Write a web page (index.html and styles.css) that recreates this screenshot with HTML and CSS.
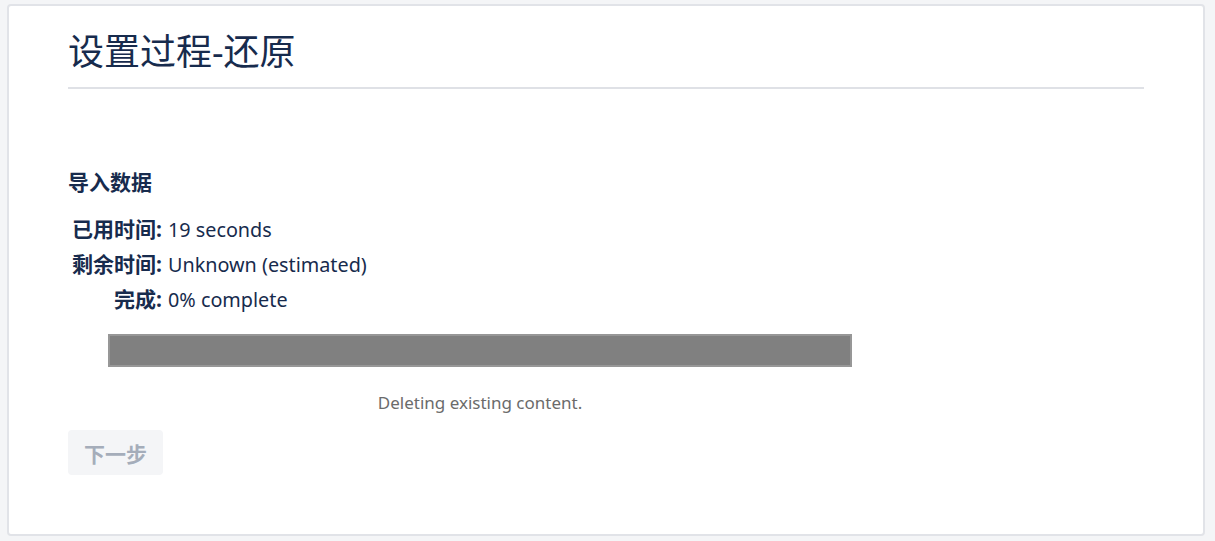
FILE: index.html
```html
<!DOCTYPE html>
<html lang="zh">
<head>
<meta charset="utf-8">
<title>设置过程-还原</title>
<link rel="stylesheet" href="styles.css">
</head>
<body>
<div class="card">
  <h1 class="title">设置过程-还原</h1>
  <h2 class="section">导入数据</h2>
  <dl class="stats">
    <div class="row"><dt>已用时间:</dt><dd>19 seconds</dd></div>
    <div class="row"><dt>剩余时间:</dt><dd>Unknown (estimated)</dd></div>
    <div class="row"><dt>完成:</dt><dd>0% complete</dd></div>
  </dl>
  <div class="progress"><div class="fill"></div></div>
  <div class="status">Deleting existing content.</div>
  <button class="next" disabled>下一步</button>
</div>
</body>
</html>
```
FILE: styles.css
```css
html, body {
  margin: 0;
  padding: 0;
}
body {
  background: #f4f5f7;
  padding: 4px 10px 5px 7px;
  height: 541px;
  box-sizing: border-box;
  font-family: "Noto Sans", "Noto Sans CJK SC", sans-serif;
  color: #172b4d;
}
.card {
  background: #fff;
  border: 2px solid #e1e3e8;
  border-radius: 4px;
  height: 532px;
  box-sizing: border-box;
  padding: 24px 59px 0 59px;
}
.title {
  margin: 0;
  font-size: 36px;
  font-weight: 400;
  line-height: 44px;
  padding-bottom: 13px;
  border-bottom: 2px solid #dfe1e6;
}
.section {
  margin: 79px 0 0 0;
  font-size: 21px;
  font-weight: 700;
  line-height: 28px;
}
.stats {
  margin: 16px 0 0 0;
}
.row {
  display: flex;
  font-size: 20px;
  line-height: 35px;
}
.row dt {
  width: 94px;
  text-align: right;
  font-weight: 700;
  font-size: 21px;
}
.row dd {
  margin: 0 0 0 6px;
  font-size: 19.8px;
}
.progress {
  margin: 17px 0 0 40px;
  width: 744px;
  height: 33px;
  box-sizing: border-box;
  border: 2px solid #979797;
  background: #808080;
}
.status {
  margin: 24px 0 0 40px;
  width: 744px;
  text-align: center;
  font-size: 17px;
  line-height: 24px;
  color: #6b6b6b;
}
.next {
  margin-top: 15px;
  height: 45px;
  width: 95px;
  padding: 0;
  border: none;
  border-radius: 4px;
  background: #f4f5f7;
  color: #a5adba;
  font-family: "Noto Sans", "Noto Sans CJK SC", sans-serif;
  font-size: 21px;
  font-weight: 700;
}
```
